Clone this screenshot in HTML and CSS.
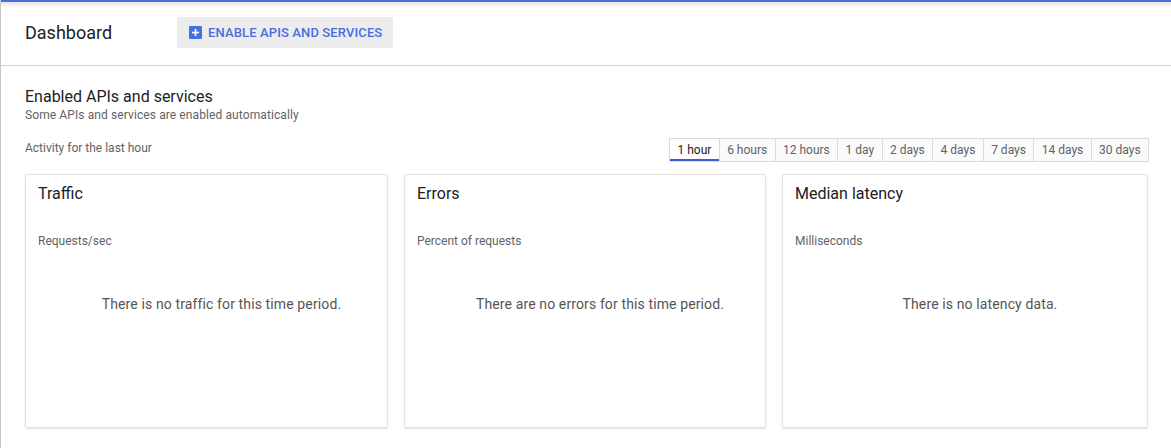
FILE: index.html
```html
<!DOCTYPE html>
<html>
<head>
<meta charset="utf-8">
<link rel="stylesheet" href="styles.css">
</head>
<body>
<div class="page">
  <header class="header">
    <h1 class="title">Dashboard</h1>
    <button class="enable-btn">
      <svg class="plus" width="13" height="13" viewBox="0 0 13 13"><rect width="13" height="13" rx="1" fill="#4a6ee0"/><rect x="3" y="5.75" width="7" height="1.6" fill="#fff"/><rect x="5.7" y="3" width="1.6" height="7" fill="#fff"/></svg>
      <span>ENABLE APIS AND SERVICES</span>
    </button>
  </header>
  <main class="main">
    <h2 class="section-title">Enabled APIs and services</h2>
    <p class="section-sub">Some APIs and services are enabled automatically</p>
    <div class="activity-row">
      <span class="activity-label">Activity for the last hour</span>
      <div class="tabs">
        <span class="tab active">1 hour</span>
        <span class="tab">6 hours</span>
        <span class="tab">12 hours</span>
        <span class="tab">1 day</span>
        <span class="tab">2 days</span>
        <span class="tab">4 days</span>
        <span class="tab">7 days</span>
        <span class="tab">14 days</span>
        <span class="tab">30 days</span>
      </div>
    </div>
    <div class="cards">
      <section class="card">
        <h3 class="card-title">Traffic</h3>
        <div class="card-unit">Requests/sec</div>
        <div class="card-empty">There is no traffic for this time period.</div>
      </section>
      <section class="card">
        <h3 class="card-title">Errors</h3>
        <div class="card-unit">Percent of requests</div>
        <div class="card-empty">There are no errors for this time period.</div>
      </section>
      <section class="card">
        <h3 class="card-title">Median latency</h3>
        <div class="card-unit">Milliseconds</div>
        <div class="card-empty">There is no latency data.</div>
      </section>
    </div>
  </main>
</div>
</body>
</html>
```

FILE: styles.css
```css
* { box-sizing: border-box; }
html, body { margin: 0; padding: 0; background: #fff; }
body {
  font-family: Roboto, "Liberation Sans", Arial, sans-serif;
  color: #212121;
  width: 1171px;
  height: 448px;
  overflow: hidden;
}
.page {
  border-left: 1px solid #c8c8c8;
  height: 448px;
}
.header {
  height: 66px;
  border-top: 2px solid #4a70e0;
  border-bottom: 1px solid #d0d0d0;
  background: linear-gradient(to bottom, rgba(0,0,0,0.10), rgba(0,0,0,0) 6px);
  display: flex;
  align-items: center;
  padding: 0 24px 2px 24px;
  gap: 64px;
}
.title {
  margin: 0;
  font-size: 18px;
  font-weight: 400;
  color: #202124;
}
.enable-btn {
  display: flex;
  align-items: center;
  gap: 6px;
  height: 31px;
  margin-left: 1px;
  padding: 0 11px 0 12px;
  border: none;
  border-radius: 2px;
  background: #ececec;
  font-family: inherit;
  font-size: 13px;
  font-weight: 500;
  color: #4a6ee0;
  letter-spacing: 0.12px;
}
.plus { display: block; }
.main {
  padding: 21px 23px 0 24px;
}
.section-title {
  margin: 0;
  font-size: 16px;
  line-height: 20px;
  font-weight: 400;
  color: #202124;
}
.section-sub {
  margin: 0;
  font-size: 12px;
  line-height: 17px;
  color: #5f6368;
  letter-spacing: 0.1px;
}
.activity-row {
  margin-top: 14px;
  display: flex;
  justify-content: space-between;
  align-items: flex-start;
}
.activity-label {
  font-size: 12px;
  color: #5f6368;
  line-height: 20px;
}
.tabs {
  display: flex;
  border: 1px solid #dadada;
  margin-right: -1px;
}
.tab {
  font-size: 12px;
  color: #5f6368;
  padding: 0 7.4px;
  height: 22px;
  line-height: 22px;
  background: #fafafa;
  border-left: 1px solid #dadada;
}
.tab:first-child { border-left: none; }
.tab.active {
  background: #fff;
  color: #202124;
  box-shadow: inset 0 -2px 0 #3c5fd6;
}
.cards {
  margin-top: 12px;
  display: grid;
  grid-template-columns: 363fr 362fr 366fr;
  gap: 16px;
}
.card {
  height: 254px;
  border: 1px solid #e2e2e2;
  border-radius: 2px;
  box-shadow: 0 1px 2px rgba(0,0,0,0.12);
  padding: 9px 12px;
  display: flex;
  flex-direction: column;
}
.card-title {
  margin: 0;
  font-size: 16px;
  line-height: 20px;
  font-weight: 400;
  color: #202124;
}
.card-unit {
  margin-top: 29px;
  font-size: 12px;
  line-height: 16px;
  color: #5f6368;
}
.card-empty {
  margin-top: 47px;
  padding-left: 30px;
  text-align: center;
  font-size: 14px;
  letter-spacing: 0.12px;
  color: #555;
}
```
